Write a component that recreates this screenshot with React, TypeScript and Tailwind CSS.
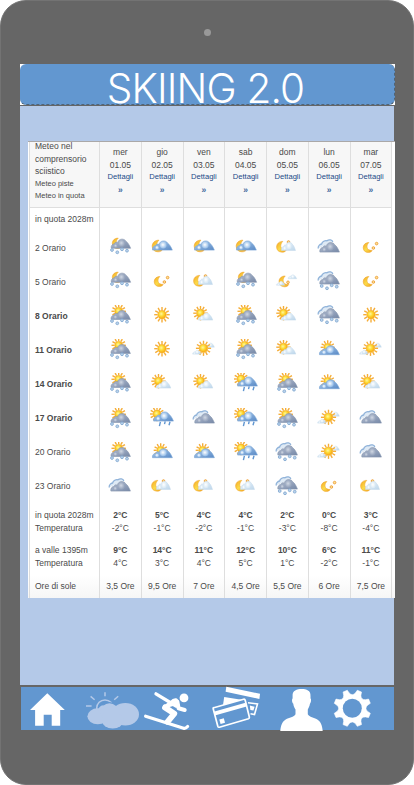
import React from "react";

type Kind =
  | "moonSnow" | "moonBlue" | "moonStars" | "moonCloud" | "moonThin"
  | "sunSnow" | "sun" | "sunCloud" | "sunThin" | "sunBlue" | "sunRain"
  | "clouds" | "cloudsSnow";

const Defs = () => (
  <svg className="absolute h-0 w-0" aria-hidden="true">
    <defs>
      <radialGradient id="sunFill" cx="0.42" cy="0.4">
        <stop offset="0" stopColor="#fff6a0" />
        <stop offset="0.55" stopColor="#fddb35" />
        <stop offset="1" stopColor="#f9b31b" />
      </radialGradient>
      <linearGradient id="moonFill" x1="0" x2="1" y1="0" y2="1">
        <stop offset="0" stopColor="#f5a623" />
        <stop offset="0.5" stopColor="#fbdb4a" />
        <stop offset="1" stopColor="#f3a01c" />
      </linearGradient>
      <linearGradient id="grayFill" x1="0" x2="1" y1="0" y2="1">
        <stop offset="0" stopColor="#b9c3d6" />
        <stop offset="1" stopColor="#7587a6" />
      </linearGradient>
      <linearGradient id="blueFill" x1="0" x2="1" y1="0" y2="1">
        <stop offset="0" stopColor="#b4d2f0" />
        <stop offset="1" stopColor="#5788c5" />
      </linearGradient>
      <linearGradient id="lightFill" x1="0" x2="1" y1="0" y2="1">
        <stop offset="0" stopColor="#f4f9fd" />
        <stop offset="1" stopColor="#bcd6eb" />
      </linearGradient>
      <radialGradient id="puffGray" cx="0.45" cy="0.45">
        <stop offset="0" stopColor="#d0d7e3" />
        <stop offset="1" stopColor="#97a5bd" />
      </radialGradient>
      <radialGradient id="puffBlue" cx="0.45" cy="0.45">
        <stop offset="0" stopColor="#ffffff" />
        <stop offset="1" stopColor="#9cc2ea" />
      </radialGradient>
      <radialGradient id="puffLight" cx="0.45" cy="0.45">
        <stop offset="0" stopColor="#ffffff" />
        <stop offset="1" stopColor="#dcebf6" />
      </radialGradient>
    </defs>
  </svg>
);

const Sun = ({ x, y, r = 4 }: { x: number; y: number; r?: number }) => (
  <g>
    {Array.from({ length: 12 }, (_, i) => (
      <line
        key={i}
        x1={x}
        y1={y - r - 0.3}
        x2={x}
        y2={y - r * 1.85}
        stroke="#f5ad38"
        strokeWidth={1.4}
        transform={`rotate(${i * 30} ${x} ${y})`}
      />
    ))}
    <circle cx={x} cy={y} r={r} fill="url(#sunFill)" stroke="#f5ab22" strokeWidth={0.7} />
  </g>
);

const Moon = ({ x, y, r = 5 }: { x: number; y: number; r?: number }) => (
  <path
    d="M1 -5.2 C-2.5 -5.3 -5 -3 -5 0.2 C-5 3.2 -2.8 5.2 0.2 5.2 C2.2 5.2 3.7 4.4 4.4 3 C1.6 3.2 -0.8 2 -1 -0.4 C-1.1 -2.3 -0.4 -3.8 1 -5.2Z"
    transform={`translate(${x} ${y}) scale(${r / 5})`}
    fill="url(#moonFill)"
    stroke="#eda029"
    strokeWidth={0.5}
  />
);

const Star = ({ x, y }: { x: number; y: number }) => (
  <circle cx={x} cy={y} r={1.3} fill="#fde293" stroke="#efa545" strokeWidth={1} />
);

const tones = {
  gray: ["url(#grayFill)", "url(#puffGray)", "#8594ad"],
  blue: ["url(#blueFill)", "url(#puffBlue)", "#7ba6d6"],
  light: ["url(#lightFill)", "url(#puffLight)", "#c3d9ea"],
};

const Cloud = ({ x, y, w, h, tone }: { x: number; y: number; w: number; h: number; tone: keyof typeof tones }) => {
  const [base, puff, edge] = tones[tone];
  return (
    <g transform={`translate(${x} ${y}) scale(${w / 20} ${h / 9})`}>
      <path
        d="M0.3 8.9 C-0.3 6.5 1.5 4.6 3.2 4.6 C3.8 3 5.6 2.6 6.8 3.4 C7.6 -0.9 13.8 -1 15.2 2 C17.3 3.2 18.8 6 20 8.9Z"
        fill={base}
        stroke={edge}
        strokeWidth={0.6}
      />
      <circle cx={10.9} cy={4} r={3.4} fill={puff} />
      <circle cx={4.8} cy={6.5} r={1.9} fill={puff} />
    </g>
  );
};

const Snow = ({ y, x = 0 }: { y: number; x?: number }) => (
  <g fill="#bcd3eb" stroke="#86abd3" strokeWidth={0.9}>
    {[[4, 0], [9.3, 2.3], [14, -0.7], [19, 0.7]].map(([cx, cy]) => (
      <circle key={cx} cx={cx + x} cy={cy + y} r={1.4} />
    ))}
  </g>
);

const Clouds = ({ dy = 0 }: { dy?: number }) => (
  <g transform={`translate(0 ${dy})`}>
    <path
      d="M1.2 11.5 C0.8 9 3 7.4 4.6 7 C5.2 4.6 8 3.2 10 3.8 C12 2 15.5 3 15.8 5"
      fill="#dfeaf5"
      stroke="#8fb2d9"
      strokeWidth={1.3}
    />
    <Cloud x={2.6} y={5.6} w={19.8} h={9.6} tone="gray" />
  </g>
);

const Weather = ({ kind }: { kind: Kind }) => {
  const art: Record<Kind, React.ReactNode> = {
    moonSnow: (<><Moon x={9.3} y={6.3} r={5} /><Cloud x={3} y={2.2} w={19.6} h={9.2} tone="gray" /><Snow y={13} /></>),
    moonBlue: (<><Moon x={7.8} y={9} r={5.6} /><Cloud x={2.3} y={4} w={20} h={9.2} tone="blue" /></>),
    moonStars: (<><Moon x={9} y={10.5} r={4.8} /><Star x={14.4} y={11} /><Star x={17.6} y={6.6} /></>),
    moonCloud: (<><Moon x={6.8} y={9.8} r={5.2} /><Star x={13.5} y={5} /><Cloud x={6.3} y={5.2} w={14.2} h={8.4} tone="light" /></>),
    moonThin: (<><Moon x={9.2} y={10.4} r={5.2} /><Star x={13} y={11.3} /><Cloud x={1.3} y={10.4} w={8.5} h={4} tone="light" /><Cloud x={13} y={3.7} w={8.8} h={4.2} tone="light" /></>),
    sunSnow: (<><Sun x={10.7} y={6.3} r={3.9} /><Cloud x={2.8} y={5.6} w={19.6} h={9} tone="gray" /><Snow y={16} /></>),
    sun: <Sun x={12} y={9.7} r={4.2} />,
    sunCloud: (<><Sun x={8.5} y={8.2} r={3.9} /><Cloud x={6.3} y={8} w={14.5} h={7.2} tone="light" /></>),
    sunThin: (<><Cloud x={14} y={4} w={8.4} h={4.3} tone="light" /><Sun x={11.5} y={9.3} r={4.1} /><Cloud x={0.5} y={11.2} w={8.5} h={4} tone="light" /></>),
    sunBlue: (<><Sun x={10.7} y={8.3} r={3.8} /><Cloud x={2.2} y={6.8} w={20.2} h={9} tone="blue" /></>),
    sunRain: (
      <>
        <Sun x={7} y={6} r={3.9} />
        <Cloud x={3.4} y={4} w={20} h={9.2} tone="blue" />
        <path d="M10.4 13.8l-1 4.4M15.2 13.4l-0.7 2.8M20 13.8l-1 3.4" stroke="#5f95d0" strokeWidth={1.4} />
      </>
    ),
    clouds: <Clouds />,
    cloudsSnow: (<><Clouds dy={-2} /><Snow y={15} x={0.7} /></>),
  };
  return (
    <svg viewBox="0 0 24 22" className="h-[22px] w-6">
      {art[kind]}
    </svg>
  );
};

const hours = ["2", "5", "8", "11", "14", "17", "20", "23"];

type Day = { name: string; date: string; icons: Kind[]; t: string[]; sun: string };

const days: Day[] = [
  { name: "mer", date: "01.05", icons: ["moonSnow", "moonSnow", "sunSnow", "sunSnow", "sunSnow", "sunSnow", "sunSnow", "clouds"], t: ["2", "-2", "9", "4"], sun: "3,5" },
  { name: "gio", date: "02.05", icons: ["moonBlue", "moonStars", "sun", "sun", "sunCloud", "sunRain", "sunBlue", "moonCloud"], t: ["5", "-1", "14", "3"], sun: "9,5" },
  { name: "ven", date: "03.05", icons: ["moonBlue", "moonCloud", "sunCloud", "sunThin", "sunCloud", "clouds", "sunBlue", "moonCloud"], t: ["4", "-2", "11", "4"], sun: "7" },
  { name: "sab", date: "04.05", icons: ["moonBlue", "moonSnow", "sunSnow", "sunSnow", "sunRain", "sunRain", "sunRain", "moonCloud"], t: ["4", "-1", "12", "5"], sun: "4,5" },
  { name: "dom", date: "05.05", icons: ["moonCloud", "moonThin", "sunCloud", "sunCloud", "sunSnow", "sunSnow", "cloudsSnow", "cloudsSnow"], t: ["2", "-3", "10", "1"], sun: "5,5" },
  { name: "lun", date: "06.05", icons: ["clouds", "cloudsSnow", "cloudsSnow", "sunBlue", "sunBlue", "sunThin", "sunThin", "moonStars"], t: ["0", "-8", "6", "-2"], sun: "6" },
  { name: "mar", date: "07.05", icons: ["moonStars", "moonStars", "sun", "sunThin", "sunCloud", "clouds", "clouds", "moonCloud"], t: ["3", "-4", "11", "-1"], sun: "7,5" },
];

const LabelColumn = () => (
  <div className="border-l border-[#dedede] whitespace-nowrap">
    <div className="h-[66px] overflow-hidden border-b border-[#dedede] bg-[#f7f7f7] pl-[5px] leading-[12.6px]">
      <div className="-mt-[2px]">Meteo nel</div>
      <div>comprensorio</div>
      <div>sciistico</div>
      <div className="text-[7.5px]">Meteo piste</div>
      <div className="text-[7.5px]">Meteo in quota</div>
    </div>
    <div className="pl-[5px]">
      <div className="flex h-[23px] items-center">in quota 2028m</div>
      {hours.map((h, i) => (
        <div key={h} className={`flex h-[34.1px] items-center ${i > 1 && i < 6 ? "font-bold" : ""}`}>
          {h} Orario
        </div>
      ))}
      <Temps rows={["in quota 2028m", "Temperatura", "a valle 1395m", "Temperatura"]} />
      <div className="pt-[10px]">Ore di sole</div>
    </div>
  </div>
);

const Temps = ({ rows, strong = false }: { rows: string[]; strong?: boolean }) => (
  <div className="pt-[5.5px] leading-[12.6px]">
    <div className={strong ? "font-bold" : ""}>{rows[0]}</div>
    <div>{rows[1]}</div>
    <div className={strong ? "mt-[10px] font-bold" : "mt-[10px]"}>{rows[2]}</div>
    <div>{rows[3]}</div>
  </div>
);

const DayColumn = ({ day }: { day: Day }) => (
  <div className="border-l border-[#dedede] text-center whitespace-nowrap">
    <div className="h-[66px] border-b border-[#dedede] bg-[#f7f7f7] pt-[4px] leading-[12.5px]">
      <div>{day.name}</div>
      <div>{day.date}</div>
      <div className="text-[7.6px] text-[#1c4a87]">Dettagli</div>
      <div className="text-[8.5px] font-bold text-[#3f689c]">»</div>
    </div>
    <div className="h-[23px]" />
    {day.icons.map((k, i) => (
      <div key={i} className="flex h-[34.1px] items-center justify-center">
        <Weather kind={k} />
      </div>
    ))}
    <Temps strong rows={day.t.map((v) => `${v}°C`)} />
    <div className="pt-[10px]">{day.sun} Ore</div>
  </div>
);

const gearPath = (() => {
  const p = (r: number, deg: number) => {
    const a = (deg * Math.PI) / 180;
    return `${(352.3 + r * Math.sin(a)).toFixed(2)} ${(708.3 - r * Math.cos(a)).toFixed(2)}`;
  };
  let d = "";
  for (let i = 0; i < 8; i++) {
    const c = 22.5 + i * 45;
    d += `${i ? "L" : "M"}${p(18.7, c - 7)}L${p(18.7, c + 7)}L${p(15.6, c + 11)}Q${p(12, c + 22.5)} ${p(15.6, c + 34)}`;
  }
  return d + "Z";
})();

const NavBar = () => (
  <nav className="ml-px flex h-[43px] w-[373px] bg-[#6297d0] pl-[5px]">
    <svg viewBox="26 687 44 46" className="h-[46px] w-[44px] shrink-0" fill="#fff">
      <path d="M47.3 693.2L64.8 710H60.2V725.7H51.7V714.8H43.7V725.7H35.1V710H30Z" />
    </svg>
    <svg viewBox="82 687 60 46" className="ml-[12px] h-[46px] w-[60px] shrink-0" fill="#b4c9e8">
      <g fill="none" stroke="#b4c9e8" strokeWidth="1.5">
        <path d="M105 692.3v4M90.6 696.4l4 3.4M118.2 696.2l-4 3.6M86 706h5.6" />
        <circle cx="105" cy="708.2" r="8.3" />
      </g>
      <g stroke="#6297d0" strokeWidth="2">
        <ellipse cx="105" cy="710" rx="6" ry="6.5" />
        <ellipse cx="109.5" cy="711.8" rx="8.5" ry="8.7" />
      </g>
      <ellipse cx="97.8" cy="716.3" rx="10.4" ry="8" />
      <ellipse cx="103" cy="710.5" rx="4.8" ry="5" />
      <ellipse cx="109.5" cy="712" rx="8.8" ry="8.8" />
      <ellipse cx="125.3" cy="714.3" rx="13.7" ry="11.3" />
      <ellipse cx="112.7" cy="720.6" rx="10.7" ry="8" />
      <path d="M104 708L119 705.5V722H102Z" />
    </svg>
    <svg viewBox="142 687 50 46" className="h-[46px] w-[50px] shrink-0" fill="none" stroke="#fff" strokeLinecap="round" strokeLinejoin="round">
      <circle cx="184" cy="697.9" r="4.4" fill="#fff" stroke="none" />
      <path d="M156 693.9L176 706" strokeWidth="3.4" />
      <path d="M177.3 701.5L178.6 708.3L184.7 710" strokeWidth="4" />
      <path d="M176 700.2C171.5 699.5 172.5 704 168 704.6M177 703L164.8 706.4" strokeWidth="3.8" />
      <path d="M165 707.5L174.3 713.7L167.5 721.8" strokeWidth="5.8" />
      <path d="M145.6 716.2L183.6 728.2C185.5 728.8 186.5 727.7 187.6 726.5" strokeWidth="3.2" />
    </svg>
    <svg viewBox="208 685 56 48" className="-mt-[2px] ml-[16px] h-[48px] w-[56px] shrink-0" fill="#fff">
      <path d="M226.3 686.8L260 693.8L259.4 699L225.6 691.8Z" />
      <path d="M224.2 697L243 700L223 705Z" />
      <path d="M248 702.7L257.5 704L254.5 714.5L250.5 713.7" fill="none" stroke="#fff" strokeWidth="1.6" />
      <path d="M249.8 705.6L254.6 706.8L253.4 710.6L250.4 710Z" />
      <path d="M213.8 707.7Q213 707.8 213.2 708.8L217.8 726.2Q218.2 727.5 219.4 727.2L248.4 718.7Q249.6 718.3 249.4 717.2L245.2 700.2Q244.8 698.9 243.6 699.2Z" fill="#6297d0" stroke="#fff" strokeWidth="1.7" />
      <path d="M213.7 711.8L245.5 702.8L246.6 706.6L214.8 715.5Z" />
      <path d="M219.3 719.4L223.8 718.2L225 722.7L220.6 724Z" />
    </svg>
    <svg viewBox="278 687 48 46" className="ml-[14px] h-[46px] w-[48px] shrink-0" fill="#fff">
      <path d="M301.5 689C306.5 689 310.8 690.5 310.5 696V698.5C311.6 699 311 703 310 703.6C309.5 707 308.3 708.5 307.8 709.5V714.2C309.5 717 314 717.5 317.3 719.5C321 721.8 322.3 726 322.7 731H280.3C280.7 726 282 721.8 285.7 719.5C289 717.5 294 717 295.5 714.2V709.5C294.7 708.5 293.7 707 293.2 703.6C292 703 291.6 699 292.6 698.5V696C292.2 690.5 297 689 301.5 689Z" />
    </svg>
    <svg viewBox="332 687 42 44" className="ml-[6px] h-[44px] w-[42px] shrink-0">
      <path d={gearPath} fill="#fff" stroke="#fff" strokeWidth="0.6" strokeLinejoin="round" />
      <circle cx="352.3" cy="708.3" r="9.5" fill="#6297d0" />
    </svg>
  </nav>
);

export default function App() {
  return (
    <div className="h-[785px] w-[414px] bg-white font-['Liberation_Sans',Arial,sans-serif]">
      <Defs />
      <div className="flex h-[785px] w-[414px] flex-col rounded-[26px] border border-[#737373] bg-[#666666] pl-[19px]">
        <div className="flex h-[63px] shrink-0 items-center pl-[183.5px]">
          <div className="h-[7px] w-[7px] rounded-full bg-[#999999]" />
        </div>
        <div className="h-[41px] w-[375px] shrink-0 bg-white">
          <header className="flex h-[41px] justify-center rounded-[6px] border-r border-b border-dashed border-[#4f6478] bg-[#6297d0]">
            <h1 className="-ml-[3px] pt-[5px] font-['Inter',sans-serif] text-[40.5px] leading-[40px] font-light tracking-[-0.8px] whitespace-nowrap text-white">
              SKIING 2.0
            </h1>
          </header>
        </div>
        <main className="mt-px h-[579px] w-[374px] shrink-0 bg-[#b4c9e8] pt-[35px] pl-[8px]">
          <section className="h-[457px] w-[367px] overflow-hidden border-t border-[#aaa8a8] bg-gradient-to-b from-white from-95% to-[#f6f6f6] pl-px text-[8.5px] leading-[12.6px] text-[#4a4a4a]">
            <div className="grid h-full w-[363px] grid-cols-[70px_repeat(7,41.75px)] border-r border-[#dedede]">
              <LabelColumn />
              {days.map((d) => (
                <DayColumn key={d.name} day={d} />
              ))}
            </div>
          </section>
        </main>
        <div className="h-[2px] shrink-0" />
        <NavBar />
      </div>
    </div>
  );
}
